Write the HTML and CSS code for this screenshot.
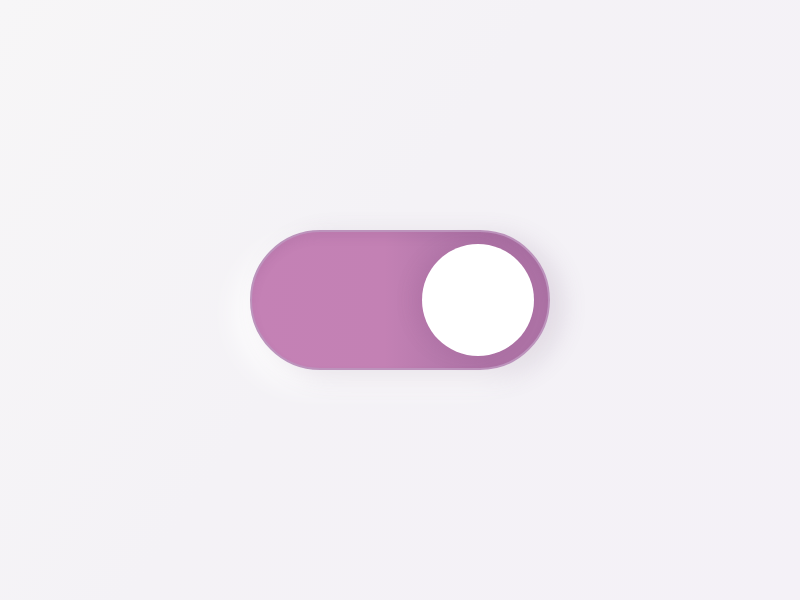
FILE: index.html
```html
<!DOCTYPE html>
<html>
<head>
<meta charset="utf-8">
<link rel="stylesheet" href="styles.css">
</head>
<body>
<div class="stage">
  <div class="toggle" role="switch" aria-checked="true">
    <div class="knob"></div>
  </div>
</div>
</body>
</html>
```
FILE: styles.css
```css
html, body {
  margin: 0;
  padding: 0;
  height: 100%;
}
body {
  background: linear-gradient(125deg, #f7f6f7 0%, #f4f2f6 45%, #f4f1f7 100%);
  font-family: "Liberation Sans", sans-serif;
}
.stage {
  height: 600px;
  display: flex;
  align-items: center;
  justify-content: center;
}
.toggle {
  box-sizing: border-box;
  width: 300px;
  height: 140px;
  border-radius: 70px;
  border: 2px solid #bc93bc;
  background: linear-gradient(90deg, #c481b5 0%, #c381b4 45%, #b77aad 62%, #ad72a5 80%, #ad72a5 100%);
  box-shadow:
    inset 0 6px 8px rgba(120, 70, 120, 0.10),
    12px 6px 26px rgba(110, 80, 120, 0.16),
    -14px 14px 30px rgba(255, 255, 255, 0.9);
  display: flex;
  align-items: center;
  justify-content: flex-end;
  padding-right: 14px;
}
.knob {
  width: 112px;
  height: 112px;
  border-radius: 50%;
  background: #ffffff;
  box-shadow: -10px 0 18px rgba(130, 70, 120, 0.12);
}
```
